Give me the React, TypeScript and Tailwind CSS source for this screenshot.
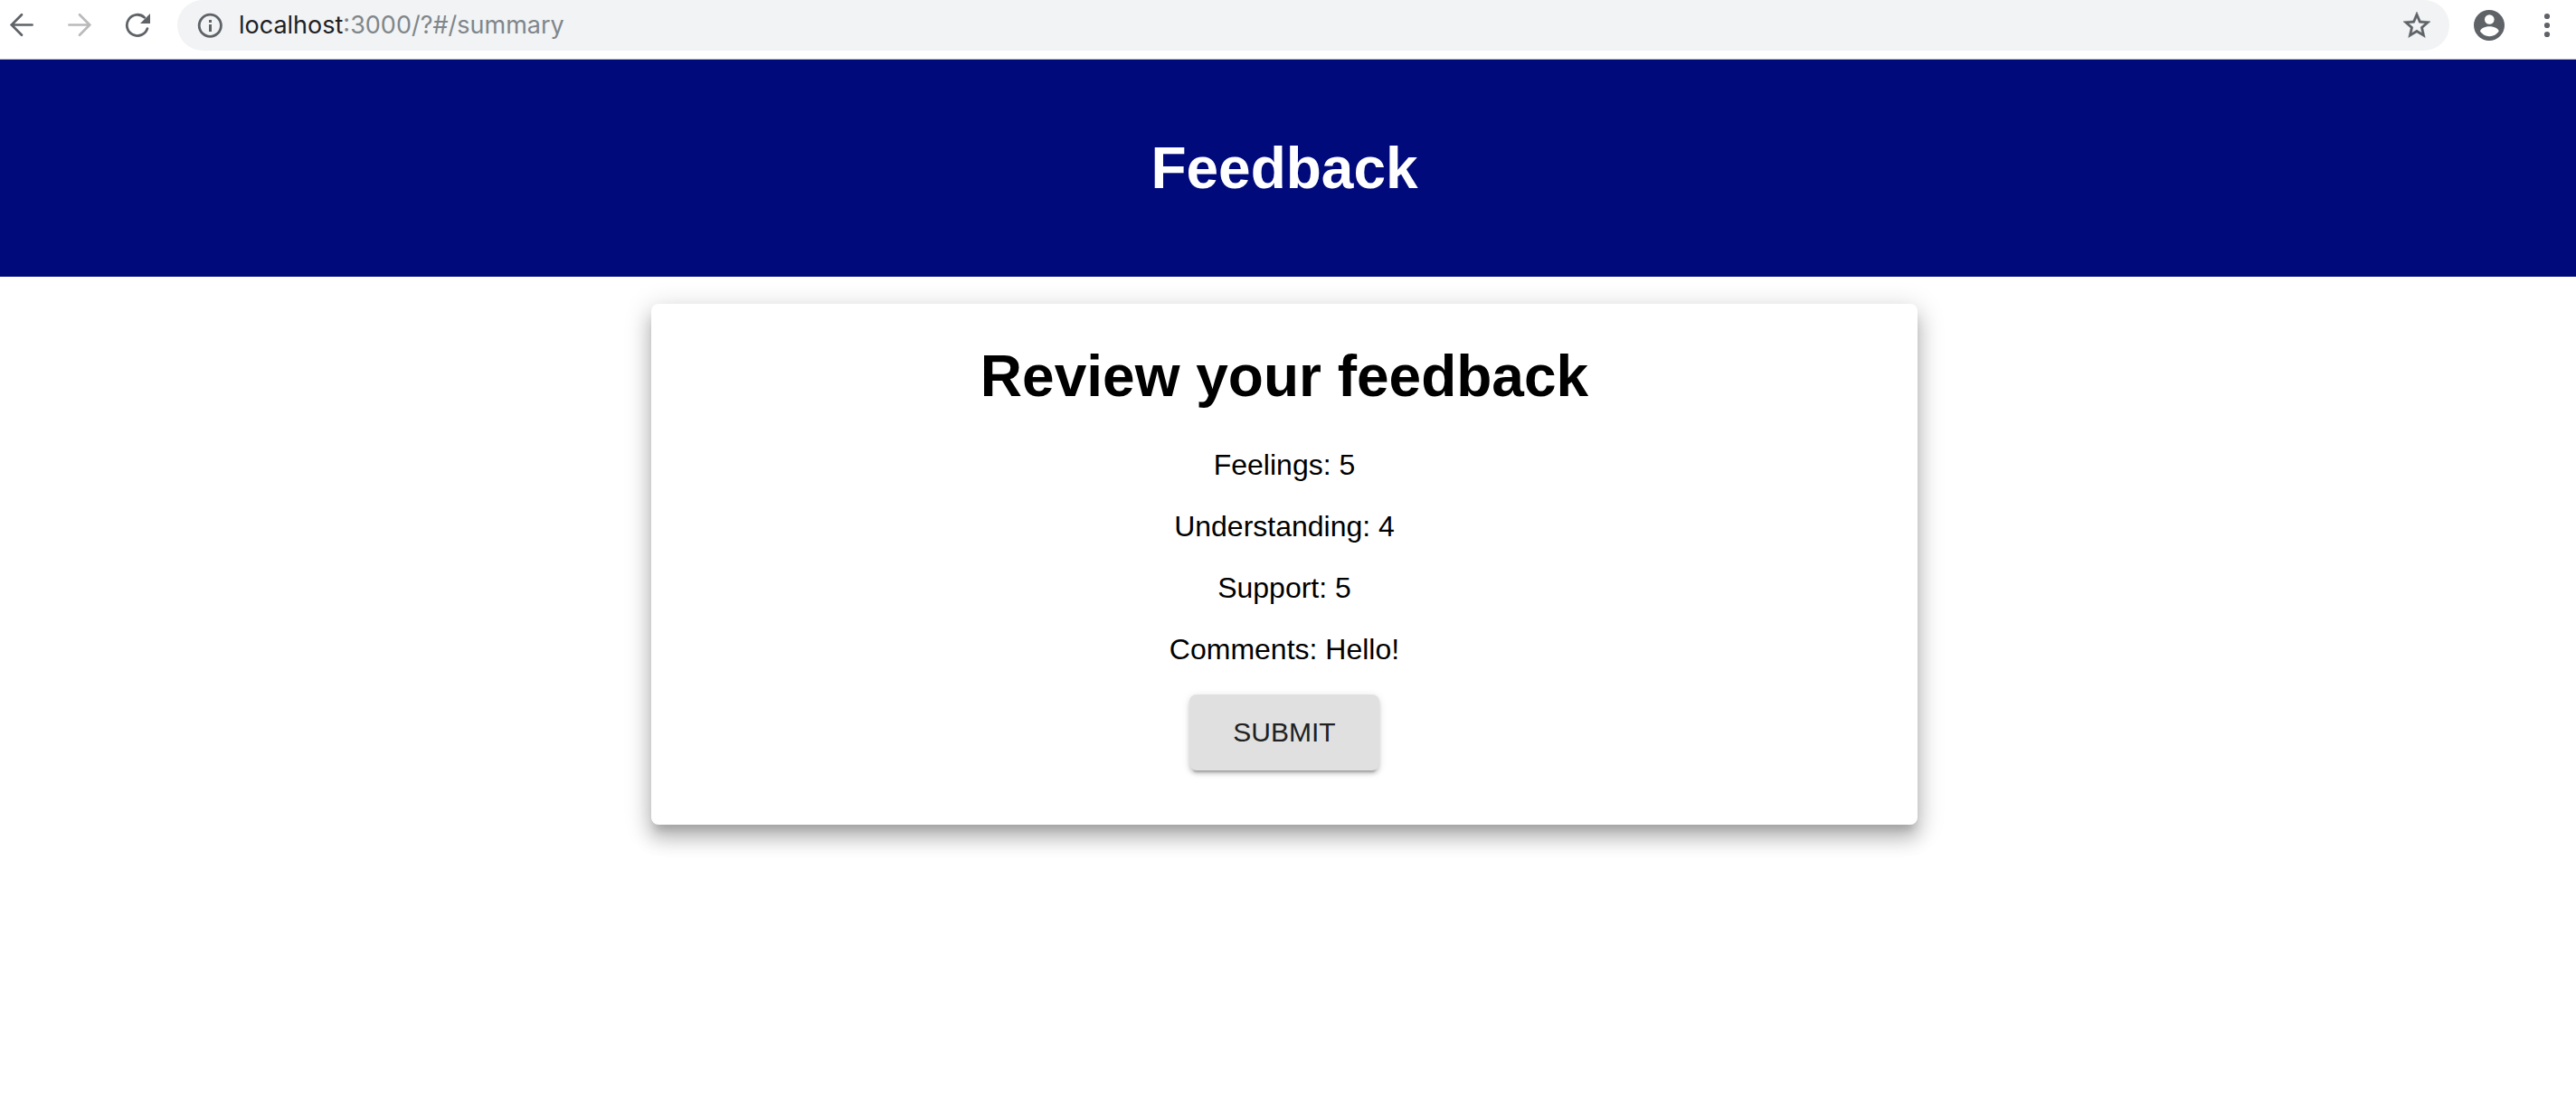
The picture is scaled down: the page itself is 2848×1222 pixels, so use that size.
import type { ReactNode } from 'react';

function ToolbarButton({ label, children }: { label: string; children: ReactNode }) {
  return (
    <button type="button" aria-label={label} className="flex size-12 shrink-0 items-center justify-center">
      {children}
    </button>
  );
}

function BackIcon() {
  return (
    <svg viewBox="0 0 28 28" className="size-7" fill="none" stroke="currentColor" strokeWidth="2.7" strokeLinecap="round">
      <path d="M25.6 13.5H3M14 2.3L2.8 13.5L14 24.7" />
    </svg>
  );
}

function ForwardIcon() {
  return (
    <svg viewBox="0 0 28 28" className="size-7" fill="none" stroke="currentColor" strokeWidth="2.7" strokeLinecap="round">
      <path d="M2.4 13.5H25M14 2.3L25.2 13.5L14 24.7" />
    </svg>
  );
}

function ReloadIcon() {
  return (
    <svg viewBox="0 0 28 28" className="size-7" fill="none">
      <path
        d="M24.9 17.6A11.6 11.6 0 1 1 21.6 5.2"
        stroke="currentColor"
        strokeWidth="2.8"
        strokeLinecap="round"
      />
      <path d="M28 1V12H17Z" fill="currentColor" />
    </svg>
  );
}

function InfoIcon() {
  return (
    <svg viewBox="0 0 36 36" className="size-9 shrink-0 text-[#5f6368]" fill="none">
      <circle cx="18.3" cy="18.3" r="12.1" stroke="currentColor" strokeWidth="2.8" />
      <path d="M17 12H20V15H17ZM17 17H20V25H17Z" fill="currentColor" />
    </svg>
  );
}

function StarIcon() {
  return (
    <svg viewBox="0 0 24 24" className="size-9" fill="currentColor" stroke="currentColor" strokeWidth="0.3">
      <path d="M22 9.24l-7.19-.62L12 2 9.19 8.63 2 9.24l5.46 4.73L5.82 21 12 17.27 18.18 21l-1.63-7.03L22 9.24zM12 15.4l-3.76 2.27 1-4.28-3.32-2.88 4.38-.38L12 6.1l1.71 4.04 4.38.38-3.32 2.88 1 4.28L12 15.4z" />
    </svg>
  );
}

function ProfileIcon() {
  return (
    <svg viewBox="0 0 34 34" className="size-[34px]">
      <circle cx="17" cy="17" r="17" fill="currentColor" />
      <circle cx="17.3" cy="10.5" r="5.3" fill="white" />
      <path d="M7 23.500C7.500 20 13.500 18.200 17.300 18.200S27.200 20 27.700 23.500C25.500 27 21.500 29.200 17.300 29.200S9.200 27 7 23.500Z" fill="white" />
    </svg>
  );
}

function MenuIcon() {
  return (
    <svg viewBox="0 0 32 32" className="size-8" fill="currentColor">
      <circle cx="16" cy="6" r="3.1" />
      <circle cx="16" cy="16" r="3.1" />
      <circle cx="16" cy="26" r="3.1" />
    </svg>
  );
}

function BrowserBar() {
  return (
    <nav
      aria-label="Browser toolbar"
      className="flex items-center gap-5 border-b border-[#b4b4b6] bg-white pr-2 pb-[9px] text-[#5f6368]"
    >
      <div className="flex gap-4">
        <ToolbarButton label="Back">
          <BackIcon />
        </ToolbarButton>
        <button
          type="button"
          aria-label="Forward"
          disabled
          className="flex size-12 shrink-0 items-center justify-center text-[#bababc]"
        >
          <ForwardIcon />
        </button>
        <ToolbarButton label="Reload">
          <ReloadIcon />
        </ToolbarButton>
      </div>
      <div className="flex h-14 min-w-0 flex-1 items-center rounded-full bg-[#f1f3f4] px-[18px] font-[Inter,sans-serif] text-[27px] leading-9">
        <InfoIcon />
        <label htmlFor="address" className="ml-3.5 text-[#202124]">
          localhost
        </label>
        <input
          id="address"
          type="text"
          defaultValue=":3000/?#/summary"
          className="min-w-0 flex-1 bg-transparent text-[#80868b] outline-none"
        />
        <button type="button" aria-label="Bookmark this page" className="shrink-0">
          <StarIcon />
        </button>
      </div>
      <div className="flex gap-4">
        <ToolbarButton label="Profile">
          <ProfileIcon />
        </ToolbarButton>
        <ToolbarButton label="Menu">
          <MenuIcon />
        </ToolbarButton>
      </div>
    </nav>
  );
}

const answers = [
  { name: 'Feelings', value: '5' },
  { name: 'Understanding', value: '4' },
  { name: 'Support', value: '5' },
  { name: 'Comments', value: 'Hello!' },
];

export default function App() {
  return (
    <div className="min-h-screen bg-white font-['Liberation_Sans',Arial,sans-serif] text-black">
      <BrowserBar />
      <header className="bg-[#000a7b] py-[84px] pr-2 text-center text-white">
        <h1 className="text-[64px] leading-[72px] font-bold">Feedback</h1>
      </header>
      <main className="pt-[30px] pr-2">
        <section className="mx-auto flex w-full max-w-[1400px] flex-col items-center rounded-lg bg-white pt-11 pb-[60px] text-center text-[32px] leading-9 shadow-[0_10px_10px_-4px_rgba(0,0,0,0.15),0_16px_20px_2px_rgba(0,0,0,0.16),0_6px_28px_4px_rgba(0,0,0,0.15)]">
          <h2 className="mb-11 text-[64px] leading-[72px] font-bold">Review your feedback</h2>
          <div className="mb-8 flex flex-col gap-8">
            {answers.map(({ name, value }) => (
              <p key={name}>
                {name}: {value}
              </p>
            ))}
          </div>
          <button
            type="button"
            className="rounded-lg bg-[#e0e0e0] px-12 py-6 text-[30px] leading-9 text-[#212121] shadow-[0_6px_2px_-4px_rgba(0,0,0,0.2),0_4px_4px_0_rgba(0,0,0,0.14),0_2px_10px_0_rgba(0,0,0,0.12)]"
          >
            SUBMIT
          </button>
        </section>
      </main>
    </div>
  );
}
